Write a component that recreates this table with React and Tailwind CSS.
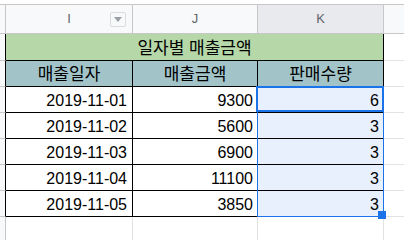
import React from 'react';

const rows = [
  ['2019-11-01', '9300', '6'],
  ['2019-11-02', '5600', '3'],
  ['2019-11-03', '6900', '3'],
  ['2019-11-04', '11100', '3'],
  ['2019-11-05', '3850', '3'],
];

const RowHead = () => (
  <div className="w-[6px] shrink-0 bg-[#f8f9fa] border-r border-r-black border-b border-b-[#c7c7c7]" />
);

const App = () => {
  return (
    <div className="relative w-[404px] h-[240px] overflow-hidden bg-white pt-[4px] font-['Liberation_Sans','Noto_Sans_CJK_KR',sans-serif] text-[16px] text-black">
      {/* column headers */}
      <div className="flex h-[30px] border-y border-[#c7c7c7] bg-[#f8f9fa] text-[13px] text-[#5f6368]">
        <div className="w-[6px] shrink-0 border-r border-[#c7c7c7]" />
        <div className="relative w-[127px] shrink-0 flex items-center justify-center border-r border-[#c7c7c7]">
          I
          <div className="absolute left-[104px] top-[7px] w-[16px] h-[15px] rounded-[2px] border border-[#dadce0] flex items-center justify-center">
            <svg width="8" height="5" viewBox="0 0 8 5">
              <path d="M0 0 L8 0 L4 5 Z" fill="#9aa0a6" />
            </svg>
          </div>
        </div>
        <div className="w-[125px] shrink-0 flex items-center justify-center border-r border-[#c7c7c7]">J</div>
        <div className="w-[126px] shrink-0 flex items-center justify-center border-r border-[#c7c7c7] bg-[#e8eaed]">K</div>
        <div className="flex-1" />
      </div>

      {/* title row */}
      <div className="flex h-[27px]">
        <RowHead />
        <div className="w-[378px] shrink-0 flex items-end justify-center pb-[2px] leading-[18px] text-[17px] bg-[#b6d7a8] border-r border-b border-black">
          일자별 매출금액
        </div>
        <div className="flex-1 border-b border-[#e2e2e2]" />
      </div>

      {/* header row */}
      <div className="flex h-[26px] text-[17px]">
        <RowHead />
        <div className="w-[127px] shrink-0 flex items-end justify-center pb-[2px] leading-[18px] bg-[#a2c4c9] border-r border-b border-black">매출일자</div>
        <div className="w-[125px] shrink-0 flex items-end justify-center pb-[2px] leading-[18px] bg-[#a2c4c9] border-r border-b border-black">매출금액</div>
        <div className="w-[126px] shrink-0 flex items-end justify-center pb-[2px] leading-[18px] bg-[#a2c4c9] border-r border-b border-black">판매수량</div>
        <div className="flex-1 border-b border-[#e2e2e2]" />
      </div>

      {rows.map(([date, amount, qty]) => (
        <div key={date} className="flex h-[26px]">
          <RowHead />
          <div className="w-[127px] shrink-0 flex items-end justify-end pr-[5px] pb-[2px] leading-[18px] border-r border-b border-black">{date}</div>
          <div className="w-[125px] shrink-0 flex items-end justify-end pr-[4px] pb-[2px] leading-[18px] border-r border-b border-black">{amount}</div>
          <div className="w-[126px] shrink-0 flex items-end justify-end pr-[4px] pb-[2px] leading-[18px] bg-[#e8f0fe] border-r border-b border-black">{qty}</div>
          <div className="flex-1 border-b border-[#e2e2e2]" />
        </div>
      ))}

      {/* empty row below */}
      <div className="flex h-[26px]">
        <div className="w-[6px] shrink-0 bg-[#f8f9fa] border-r border-b border-[#c7c7c7]" />
        <div className="w-[127px] shrink-0 border-r border-b border-[#e2e2e2]" />
        <div className="w-[125px] shrink-0 border-r border-b border-[#e2e2e2]" />
        <div className="w-[126px] shrink-0 border-r border-b border-[#e2e2e2]" />
        <div className="flex-1 border-b border-[#e2e2e2]" />
      </div>

      {/* selection overlay */}
      <div className="absolute left-[257px] top-[86px] w-[127px] h-[131px] border border-[#1a73e8] pointer-events-none" />
      <div className="absolute left-[256px] top-[86px] w-[128px] h-[26px] border-2 border-[#1a73e8] pointer-events-none" />
      <div className="absolute left-[378px] top-[211px] w-[8px] h-[8px] bg-[#1a73e8]" />
    </div>
  );
};

export default App;
